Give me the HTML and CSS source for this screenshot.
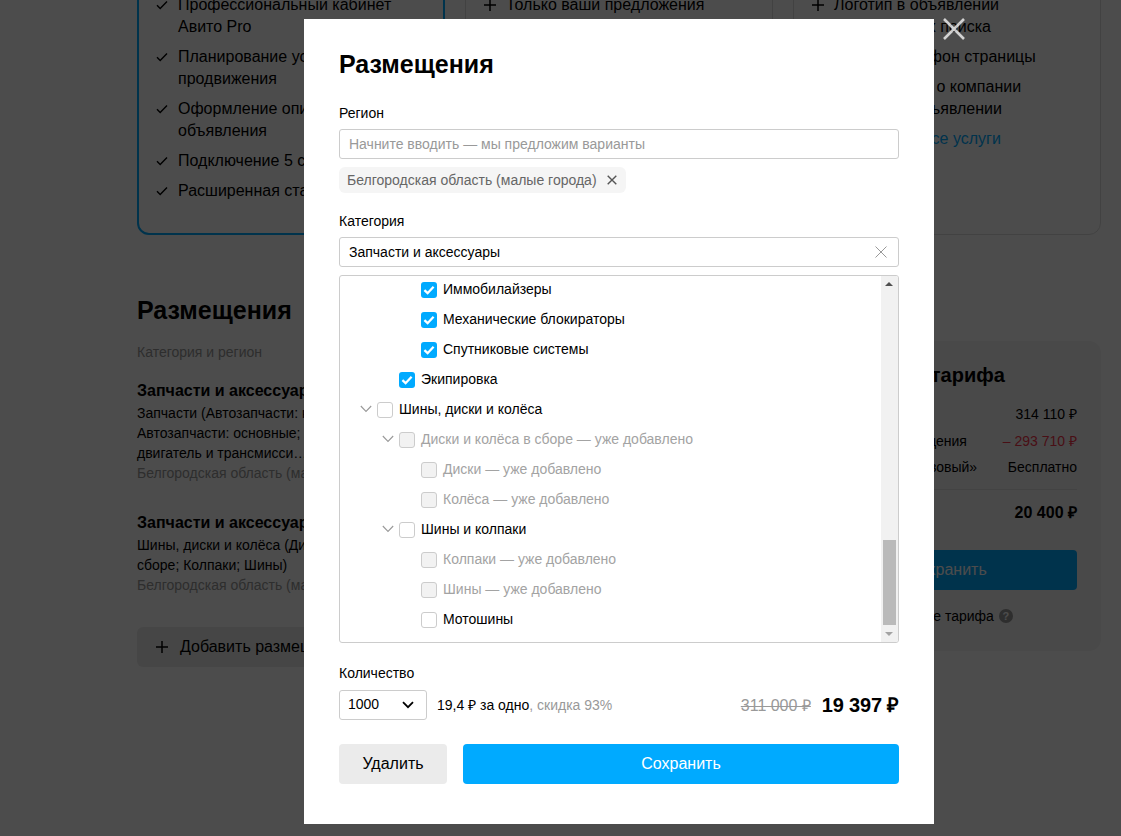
FILE: index.html
```html
<!DOCTYPE html>
<html lang="ru">
<head>
<meta charset="utf-8">
<title>Размещения</title>
<link rel="stylesheet" href="styles.css">
</head>
<body>
<svg class="defs" width="0" height="0" aria-hidden="true">
  <symbol id="tick" viewBox="0 0 12 12"><path d="M1 6.2 4.2 9.6 11 2.4" fill="none" stroke="currentColor" stroke-width="1.4"/></symbol>
  <symbol id="plus" viewBox="0 0 12 12"><path d="M6 0v12M0 6h12" fill="none" stroke="currentColor" stroke-width="1.5"/></symbol>
  <symbol id="box-tick" viewBox="0 0 16 16"><path d="M3.4 8.2 6.6 11.2 12.6 4.8" fill="none" stroke="#fff" stroke-width="2.3"/></symbol>
  <symbol id="chev" viewBox="0 0 12 8"><path d="M.8 1 6 6.4 11.2 1" fill="none" stroke="currentColor" stroke-width="1.1"/></symbol>
</svg>

<div class="page">
  <section class="tariffs">
    <div class="card card-active">
      <ul class="features">
        <li><svg class="ico"><use href="#tick"/></svg><span>Профессиональный кабинет<br>Авито Pro</span></li>
        <li><svg class="ico"><use href="#tick"/></svg><span>Планирование услуг<br>продвижения</span></li>
        <li><svg class="ico"><use href="#tick"/></svg><span>Оформление описания<br>объявления</span></li>
        <li><svg class="ico"><use href="#tick"/></svg><span>Подключение 5 сотрудников</span></li>
        <li><svg class="ico"><use href="#tick"/></svg><span>Расширенная статистика</span></li>
      </ul>
    </div>
    <div class="card">
      <ul class="features">
        <li><svg class="ico"><use href="#plus"/></svg><span>Только ваши предложения</span></li>
      </ul>
    </div>
    <div class="card">
      <ul class="features">
        <li><svg class="ico"><use href="#plus"/></svg><span>Логотип в объявлении<br>и результатах поиска</span></li>
        <li><svg class="ico"><use href="#plus"/></svg><span>Уникальный фон страницы</span></li>
        <li><svg class="ico"><use href="#plus"/></svg><span>Информация о компании<br>и услуги в объявлении</span></li>
        <li class="all-link"><span>Развернуть все услуги</span></li>
      </ul>
    </div>
  </section>

  <section class="layout">
    <div>
      <h2 class="page-title">Размещения</h2>
      <p class="muted sub">Категория и регион</p>
      <div class="placement">
        <h3>Запчасти и аксессуары</h3>
        <p>Запчасти (Автозапчасти: кузов;<br>Автозапчасти: основные; Автозапчасти:<br>двигатель и трансмисси…</p>
        <p class="muted">Белгородская область (малые города)</p>
      </div>
      <div class="placement">
        <h3>Запчасти и аксессуары</h3>
        <p>Шины, диски и колёса (Диски и колёса в<br>сборе; Колпаки; Шины)</p>
        <p class="muted">Белгородская область (малые города)</p>
      </div>
      <div class="add-btn"><svg class="ico"><use href="#plus"/></svg>Добавить размещение</div>
    </div>
    <aside class="summary">
      <h3>Стоимость тарифа</h3>
      <div class="sum-row first"><span>Размещения</span><span>314 110 ₽</span></div>
      <div class="sum-row second"><span>Скидка за размещения</span><span class="red">– 293 710 ₽</span></div>
      <div class="sum-row third"><span>Набор опций «Базовый»</span><span>Бесплатно</span></div>
      <div class="sum-total"><span>Итого</span><span>20 400 ₽</span></div>
      <div class="sum-btn">Сохранить</div>
      <div class="sum-note">Важное продление тарифа<span class="q">?</span></div>
    </aside>
  </section>
</div>

<div class="overlay"></div>

<svg class="close" viewBox="0 0 22 22" width="22" height="22" aria-label="Закрыть"><path d="M1 1 21 21M21 1 1 21" fill="none" stroke="#fff" stroke-width="2.6"/></svg>

<div class="modal">
  <h2 class="modal-title">Размещения</h2>

  <label class="label label-first">Регион</label>
  <input class="field" type="text" placeholder="Начните вводить — мы предложим варианты">
  <div class="chip">Белгородская область (малые города)
    <svg class="chip-x" viewBox="0 0 10 10" width="10" height="10"><path d="M.7.7 9.3 9.3M9.3.7.7 9.3" fill="none" stroke="#555" stroke-width="1.4"/></svg>
  </div>

  <label class="label label-next">Категория</label>
  <div class="field-wrap">
    <input class="field" type="text" value="Запчасти и аксессуары">
    <svg class="field-x" viewBox="0 0 12 12" width="12" height="12"><path d="M.5.5 11.5 11.5M11.5.5.5 11.5" fill="none" stroke="#999" stroke-width="1"/></svg>
  </div>

  <div class="tree-box">
    <div class="tree">
      <div class="row lvl3"><span class="box on"><svg><use href="#box-tick"/></svg></span>Иммобилайзеры</div>
      <div class="row lvl3"><span class="box on"><svg><use href="#box-tick"/></svg></span>Механические блокираторы</div>
      <div class="row lvl3"><span class="box on"><svg><use href="#box-tick"/></svg></span>Спутниковые системы</div>
      <div class="row lvl2"><span class="box on"><svg><use href="#box-tick"/></svg></span>Экипировка</div>
      <div class="row parent1"><svg class="chev"><use href="#chev"/></svg><span class="box"></span>Шины, диски и колёса</div>
      <div class="row parent2 off"><svg class="chev"><use href="#chev"/></svg><span class="box"></span>Диски и колёса в сборе — уже добавлено</div>
      <div class="row lvl3 off"><span class="box"></span>Диски — уже добавлено</div>
      <div class="row lvl3 off"><span class="box"></span>Колёса — уже добавлено</div>
      <div class="row parent2"><svg class="chev"><use href="#chev"/></svg><span class="box"></span>Шины и колпаки</div>
      <div class="row lvl3 off"><span class="box"></span>Колпаки — уже добавлено</div>
      <div class="row lvl3 off"><span class="box"></span>Шины — уже добавлено</div>
      <div class="row lvl3"><span class="box"></span>Мотошины</div>
    </div>
    <div class="scrollbar">
      <span class="arrow arrow-up"></span>
      <span class="track"><span class="thumb"></span></span>
      <span class="arrow arrow-down"></span>
    </div>
  </div>

  <label class="label label-qty">Количество</label>
  <div class="qty-row">
    <div class="select"><span class="select-value">1000</span>
      <svg viewBox="0 0 12 8" width="12" height="8"><path d="M1 1.2 6 6.2 11 1.2" fill="none" stroke="#000" stroke-width="1.8"/></svg>
    </div>
    <div class="unit">19,4 ₽ за одно<span class="unit-muted">, скидка 93%</span></div>
    <div class="price"><s>311 000 ₽</s><b>19 397 ₽</b></div>
  </div>

  <div class="actions">
    <button class="btn btn-del" type="button">Удалить</button>
    <button class="btn btn-save" type="button">Сохранить</button>
  </div>
</div>
</body>
</html>
```

FILE: styles.css
```css
* { box-sizing: border-box; }
html, body { margin: 0; padding: 0; height: 100%; }
body {
  position: relative;
  height: 836px;
  overflow: hidden;
  background: #fff;
  color: #000;
  font-family: "Liberation Sans", Arial, sans-serif;
  font-size: 14px;
}
.defs { position: absolute; }
h2, h3, p, ul { margin: 0; padding: 0; }

/* Page beneath the dialog */
.page { width: 964px; margin: -40px 0 0 137px; }
.tariffs { display: grid; grid-template-columns: repeat(3, 308px); gap: 20px; }
.card {
  height: 275px;
  padding: 33px 18px 0;
  border: 1px solid #ddd;
  border-radius: 12px;
}
.card-active { padding: 32px 17px 0; border: 2px solid #00aaff; }
.features { list-style: none; font-size: 16px; line-height: 22px; }
.features li { display: flex; margin-bottom: 8px; white-space: nowrap; }
.ico { flex: none; width: 12px; height: 12px; margin: 5px 10px 0 0; color: #000; }
.all-link { padding-left: 22px; color: #00aaff; }

.layout {
  display: grid;
  grid-template-columns: 636px 308px;
  gap: 20px;
  margin-top: 59px;
  align-items: start;
}
.page-title, .modal-title { font-size: 25px; line-height: 32px; font-weight: 700; }
.muted { color: #999; }
.sub { margin-top: 16px; line-height: 20px; }
.placement { margin-top: 17px; padding-top: 1px; line-height: 20px; }
.placement + .placement { margin-top: 28px; }
.placement h3 { margin-bottom: 1px; font-size: 16px; line-height: 22px; font-weight: 700; }
.add-btn {
  display: flex;
  align-items: center;
  width: 240px;
  height: 40px;
  margin-top: 32px;
  padding-left: 19px;
  border-radius: 6px;
  background: #ebebeb;
  font-size: 16px;
  white-space: nowrap;
}
.add-btn .ico { width: 12px; height: 12px; margin: 0 12px 0 0; }

.summary {
  height: 310px;
  margin-top: 47px;
  padding: 20px 24px 0;
  border-radius: 12px;
  background: #f5f5f5;
}
.summary h3 { font-size: 20px; line-height: 28px; font-weight: 700; }
.sum-row { display: flex; justify-content: space-between; line-height: 20px; }
.first { margin-top: 15px; }
.second { margin-top: 7px; }
.third { margin-top: 6px; }
.red { color: #f3344a; }
.sum-total {
  display: flex;
  justify-content: space-between;
  margin-top: 12px;
  padding-top: 11px;
  border-top: 1px solid #e0e0e0;
  font-size: 16px;
  line-height: 24px;
  font-weight: 700;
}
.sum-btn {
  height: 40px;
  margin-top: 25px;
  border-radius: 4px;
  background: #00aaff;
  color: #fff;
  font-size: 16px;
  line-height: 40px;
  text-align: center;
}
.sum-note { display: flex; align-items: center; margin-top: 16px; line-height: 20px; gap: 5px; }
.q {
  width: 14px;
  height: 14px;
  border-radius: 50%;
  background: #999;
  color: #fff;
  font-size: 11px;
  font-weight: 700;
  line-height: 14px;
  text-align: center;
}

/* Overlay + dialog */
.overlay { position: absolute; inset: 0; background: rgba(0, 0, 0, .7); }
.close { position: absolute; left: 943px; top: 18px; opacity: .75; }
.modal {
  position: absolute;
  left: 304px;
  top: 19px;
  width: 630px;
  height: 805px;
  padding: 29px 35px 40px;
  background: #fff;
}
.label { display: block; line-height: 20px; }
.label-first { margin: 23px 0 6px; }
.label-next { margin: 18px 0 6px; }
.label-qty { margin: 20px 0 7px; }
.field {
  display: block;
  width: 100%;
  height: 30px;
  padding: 0 9px;
  border: 1px solid #ccc;
  border-radius: 3px;
  outline: 0;
  background: #fff;
  color: #000;
  font: 14px "Liberation Sans", Arial, sans-serif;
}
.field::placeholder { color: #999; opacity: 1; }
.chip {
  display: inline-flex;
  align-items: center;
  height: 26px;
  margin-top: 8px;
  padding: 0 9px 0 8px;
  border-radius: 6px;
  background: #f5f5f5;
  color: #666;
  vertical-align: top;
}
.chip-x { margin-left: 10px; }
.field-wrap { position: relative; }
.field-x { position: absolute; right: 12px; top: 9px; }

.tree-box {
  display: flex;
  height: 368px;
  margin-top: 8px;
  border: 1px solid #ccc;
  border-radius: 3px;
  overflow: hidden;
}
.tree { flex: 1; min-width: 0; margin-top: -2px; }
.row { display: flex; align-items: center; height: 30px; white-space: nowrap; }
.lvl3 { padding-left: 81px; }
.lvl2 { padding-left: 59px; }
.parent1 { padding-left: 15px; }
.parent2 { padding-left: 37px; }
.chev { flex: none; width: 12px; height: 8px; margin: 0 5px; color: #999; }
.box {
  display: flex;
  flex: none;
  width: 16px;
  height: 16px;
  margin: 2px 6px 0 0;
  border: 1px solid #ccc;
  border-radius: 3px;
  background: #fff;
}
.box svg { display: block; width: 16px; height: 16px; flex: none; }
.box.on { border: 0; background: #00aaff; }
.off { color: #a3a3a3; }
.off .box { background: #f2f2f2; }
.scrollbar { display: flex; flex-direction: column; flex: none; width: 17px; background: #f1f1f1; }
.arrow { position: relative; flex: none; height: 17px; }
.arrow::after {
  content: "";
  position: absolute;
  left: 4px;
  border-left: 4px solid transparent;
  border-right: 4px solid transparent;
}
.arrow-up::after { top: 6px; border-bottom: 4px solid #505050; }
.arrow-down::after { top: 7px; border-top: 4px solid #a3a3a3; }
.track { display: flex; flex: 1; align-items: flex-end; justify-content: center; }
.thumb { width: 13px; height: 85px; background: #bababa; }

.qty-row { display: flex; align-items: center; height: 30px; }
.select {
  display: flex;
  align-items: center;
  justify-content: space-between;
  width: 88px;
  height: 30px;
  padding: 0 12px 0 8px;
  border: 1px solid #ccc;
  border-radius: 3px;
}
.select-value { margin-bottom: 2px; }
.unit { margin: 0 0 2px 10px; }
.unit-muted { color: #999; }
.price { display: flex; align-items: center; margin-left: auto; }
.price s { color: #999; font-size: 16px; }
.price b { margin: 0 0 2px 11px; font-size: 20px; letter-spacing: -.2px; }

.actions { display: flex; gap: 16px; margin-top: 24px; }
.btn {
  height: 40px;
  padding: 0;
  border: 0;
  border-radius: 4px;
  font: 16px "Liberation Sans", Arial, sans-serif;
}
.btn-del { width: 108px; background: #ebebeb; color: #000; }
.btn-save { flex: 1; background: #00aaff; color: #fff; }
```
